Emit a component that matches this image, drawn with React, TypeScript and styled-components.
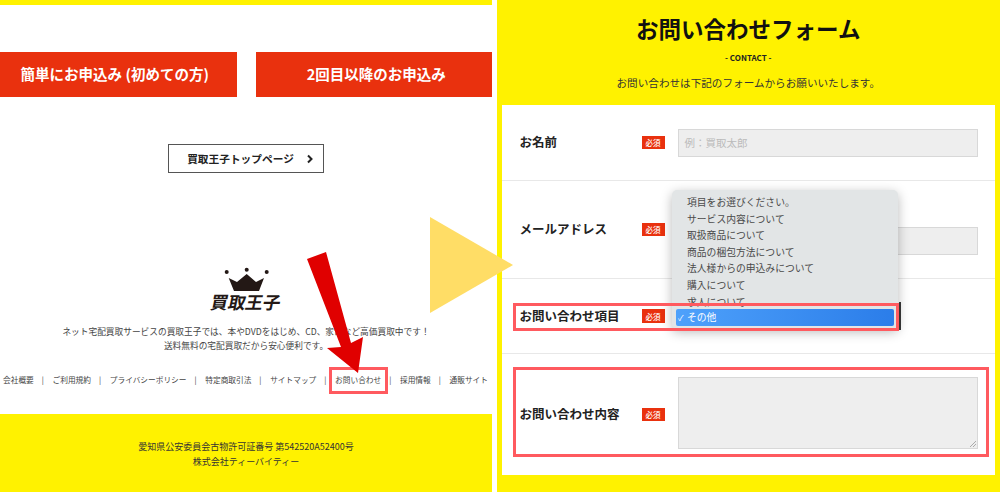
import styled, { createGlobalStyle } from "styled-components"

const GlobalStyle = createGlobalStyle`
  html, body {
    margin: 0;
    padding: 0;
    background: #fff;
  }
  * {
    box-sizing: border-box;
  }
  body {
    font-family: "Noto Sans CJK JP", "Noto Sans", sans-serif;
    color: #222;
  }
`

const Page = styled.div`
  position: relative;
  width: 1000px;
  height: 492px;
  overflow: hidden;
  display: flex;
  justify-content: space-between;
  background: #fff;
`

/* left half: site footer */
const Left = styled.section`
  width: 492px;
  height: 492px;
  display: flex;
  flex-direction: column;
  align-items: center;
`

const TopStrip = styled.div`
  width: 100%;
  height: 4.5px;
  background: #fff200;
`

const ApplyRow = styled.div`
  width: 100%;
  margin-top: 47.5px;
  display: flex;
  justify-content: space-between;
`

const ApplyButton = styled.a<{ $shift: number }>`
  width: 236.5px;
  height: 45px;
  background: #e9310e;
  color: #fff;
  font-size: 14.5px;
  line-height: 43px;
  font-weight: 700;
  text-align: center;
  padding-left: ${(p) => (p.$shift > 0 ? p.$shift : 0)}px;
  padding-right: ${(p) => (p.$shift < 0 ? -p.$shift : 0)}px;
`

const TopLink = styled.a`
  margin-top: 47px;
  width: 156px;
  height: 29px;
  border: 1px solid #555;
  color: #222;
  font-size: 10.7px;
  font-weight: 700;
  display: flex;
  align-items: center;
  justify-content: center;
  gap: 12px;
  padding-left: 9px;

  svg {
    width: 8px;
    height: 10px;
  }
`

const Logo = styled.div`
  margin-top: 94px;
  display: flex;
  flex-direction: column;
  align-items: center;

  svg {
    width: 46px;
    height: 25px;
  }
`

const LogoText = styled.span`
  font-size: 17.5px;
  line-height: 20px;
  font-weight: 700;
  color: #231815;
  transform: skewX(-12deg);
  letter-spacing: -0.1px;
`

const Blurb = styled.p`
  margin: 13px 0 0;
  font-size: 8.7px;
  line-height: 14px;
  color: #444;
  text-align: center;
`

const FooterNav = styled.nav`
  width: 100%;
  margin-top: 21px;
  padding: 0 4px 0 3px;
  display: flex;
  justify-content: space-between;
`

const NavItem = styled.a`
  position: relative;
  font-size: 7.7px;
  line-height: 12px;
  color: #444;

  &:not(:last-child)::after {
    content: "|";
    position: absolute;
    top: 0;
    right: -10px;
  }
`

const License = styled.div`
  margin-top: 28px;
  width: 100%;
  height: 77.5px;
  background: #fff200;
  padding-top: 25px;
  font-size: 9px;
  line-height: 15px;
  color: #333;
  text-align: center;
`

/* right half: contact form */
const Right = styled.section`
  width: 503px;
  height: 492px;
  background: #fff200;
  padding: 0 5px 0 4.5px;
  display: flex;
  flex-direction: column;
`

const FormHead = styled.header`
  height: 105px;
  padding-top: 13px;
  text-align: center;
`

const FormTitle = styled.h1`
  margin: 0;
  font-size: 22.5px;
  line-height: 30px;
  font-weight: 700;
  color: #111;
`

const FormEn = styled.div`
  margin-top: 9px;
  font-size: 8px;
  line-height: 12px;
  font-weight: 700;
  color: #222;
`

const FormLead = styled.p`
  margin: 11px 0 0;
  font-size: 10.6px;
  line-height: 16px;
  color: #333;
`

const FormCard = styled.div`
  height: 370px;
  background: #fff;
`

const Row = styled.div<{ $h: number }>`
  height: ${(p) => p.$h}px;
  padding: 0 17px 0 18px;
  display: grid;
  grid-template-columns: 122px 36px 300px;
  align-items: center;
  border-bottom: 1px solid #e8e8e8;

  &:last-child {
    border-bottom: none;
  }
`

const Label = styled.label`
  margin-top: -2px;
  font-size: 12.5px;
  font-weight: 700;
  color: #222;
`

const Required = styled.span`
  width: 23px;
  height: 13.5px;
  background: #e9310e;
  color: #fff;
  font-size: 7.5px;
  font-weight: 500;
  display: flex;
  align-items: center;
  justify-content: center;
`

const TextInput = styled.div`
  width: 300px;
  height: 28px;
  background: #eee;
  border: 1px solid #d8d8d8;
  padding-left: 6px;
  color: #bbb;
  font-size: 10.5px;
  line-height: 26px;
`

const EmailInput = styled(TextInput)`
  margin-top: 23px;
`

const TextArea = styled.div`
  position: relative;
  width: 300px;
  height: 72px;
  margin-top: -4px;
  background: #eee;
  border: 1px solid #d8d8d8;

  svg {
    position: absolute;
    right: 1px;
    bottom: 1px;
    width: 7px;
    height: 7px;
  }
`

const Menu = styled.ul`
  position: absolute;
  left: 672px;
  top: 190px;
  width: 226px;
  height: 139px;
  margin: 0;
  padding: 4px 4px 0;
  list-style: none;
  background: #e2e5e6;
  border-radius: 5px;
  box-shadow: 0 3px 12px rgba(0, 0, 0, 0.28);
  overflow: hidden;
`

const MenuItem = styled.li`
  height: 16.6px;
  padding-left: 11px;
  font-size: 9.8px;
  line-height: 16.6px;
  color: #4a4a4a;
`

const MenuSelected = styled.div`
  position: absolute;
  left: 676px;
  top: 309px;
  width: 218px;
  height: 17px;
  border-radius: 2px;
  background: linear-gradient(90deg, #4ea1fb, #2b7de9);
  color: #fff;
  font-size: 9.8px;
  line-height: 17px;
  padding-left: 11px;

  &::before {
    content: "✓";
    position: absolute;
    left: 2px;
    font-size: 8px;
  }
`

const SelectEdge = styled.div`
  position: absolute;
  left: 899px;
  top: 302px;
  width: 2px;
  height: 28px;
  background: #333;
`

const Highlight = styled.div<{ $x: number; $y: number; $w: number; $h: number }>`
  position: absolute;
  left: ${(p) => p.$x}px;
  top: ${(p) => p.$y}px;
  width: ${(p) => p.$w}px;
  height: ${(p) => p.$h}px;
  border: 3px solid #ff5a5f;
  pointer-events: none;
`

const Overlay = styled.svg`
  position: absolute;
  left: 0;
  top: 0;
  width: 1000px;
  height: 492px;
  pointer-events: none;
`

const navItems = ["会社概要", "ご利用規約", "プライバシーポリシー", "特定商取引法", "サイトマップ", "お問い合わせ", "採用情報", "通販サイト"]

const menuItems = ["項目をお選びください。", "サービス内容について", "取扱商品について", "商品の梱包方法について", "法人様からの申込みについて", "購入について", "求人について"]

export default function App() {
  return (
    <Page>
      <GlobalStyle />
      <Left>
        <TopStrip />
        <ApplyRow>
          <ApplyButton $shift={-7}>簡単にお申込み (初めての方)</ApplyButton>
          <ApplyButton $shift={5}>2回目以降のお申込み</ApplyButton>
        </ApplyRow>
        <TopLink>
          買取王子トップページ
          <svg viewBox="0 0 8 10">
            <path d="M2 1.5l3.5 3.5-3.5 3.5" fill="none" stroke="#222" strokeWidth="2" />
          </svg>
        </TopLink>
        <Logo>
          <svg viewBox="0 0 46 25">
            <circle cx="3.7" cy="5" r="2" fill="#231815" />
            <circle cx="23.7" cy="2.7" r="2" fill="#231815" />
            <circle cx="43.7" cy="5" r="2" fill="#231815" />
            <path d="M5.7 11l8.3 4 9.7-8 9.3 8 8-4-5 13H11z" fill="#231815" />
          </svg>
          <LogoText>買取王子</LogoText>
        </Logo>
        <Blurb>
          ネット宅配買取サービスの買取王子では、本やDVDをはじめ、CD、家電など高価買取中です！
          <br />
          送料無料の宅配買取だから安心便利です。
        </Blurb>
        <FooterNav>
          {navItems.map((item) => (
            <NavItem key={item}>{item}</NavItem>
          ))}
        </FooterNav>
        <License>
          愛知県公安委員会古物許可証番号 第542520A52400号
          <br />
          株式会社ティーバイティー
        </License>
      </Left>
      <Right>
        <FormHead>
          <FormTitle>お問い合わせフォーム</FormTitle>
          <FormEn>- CONTACT -</FormEn>
          <FormLead>お問い合わせは下記のフォームからお願いいたします。</FormLead>
        </FormHead>
        <FormCard>
          <Row $h={76}>
            <Label>お名前</Label>
            <Required>必須</Required>
            <TextInput>例：買取太郎</TextInput>
          </Row>
          <Row $h={98}>
            <Label>メールアドレス</Label>
            <Required>必須</Required>
            <EmailInput />
          </Row>
          <Row $h={75}>
            <Label>お問い合わせ項目</Label>
            <Required>必須</Required>
          </Row>
          <Row $h={121}>
            <Label>お問い合わせ内容</Label>
            <Required>必須</Required>
            <TextArea>
              <svg viewBox="0 0 7 7">
                <path d="M1 7l6-6M4 7l3-3" stroke="#999" strokeWidth="0.8" />
              </svg>
            </TextArea>
          </Row>
        </FormCard>
      </Right>

      <Menu>
        {menuItems.map((item) => (
          <MenuItem key={item}>{item}</MenuItem>
        ))}
      </Menu>
      <MenuSelected>その他</MenuSelected>

      <Highlight $x={329} $y={367} $w={59} $h={27} />
      <Highlight $x={513} $y={303} $w={386} $h={28} />
      <Highlight $x={513} $y={367} $w={476} $h={90} />
      <SelectEdge />

      <Overlay viewBox="0 0 1000 492">
        <polygon points="430,217 513,265 430,313" fill="#ffdd66" />
        <polygon points="307,259 326,252 351,343 363,337 358,373 327,348 341,347" fill="#e00000" />
      </Overlay>
    </Page>
  )
}
